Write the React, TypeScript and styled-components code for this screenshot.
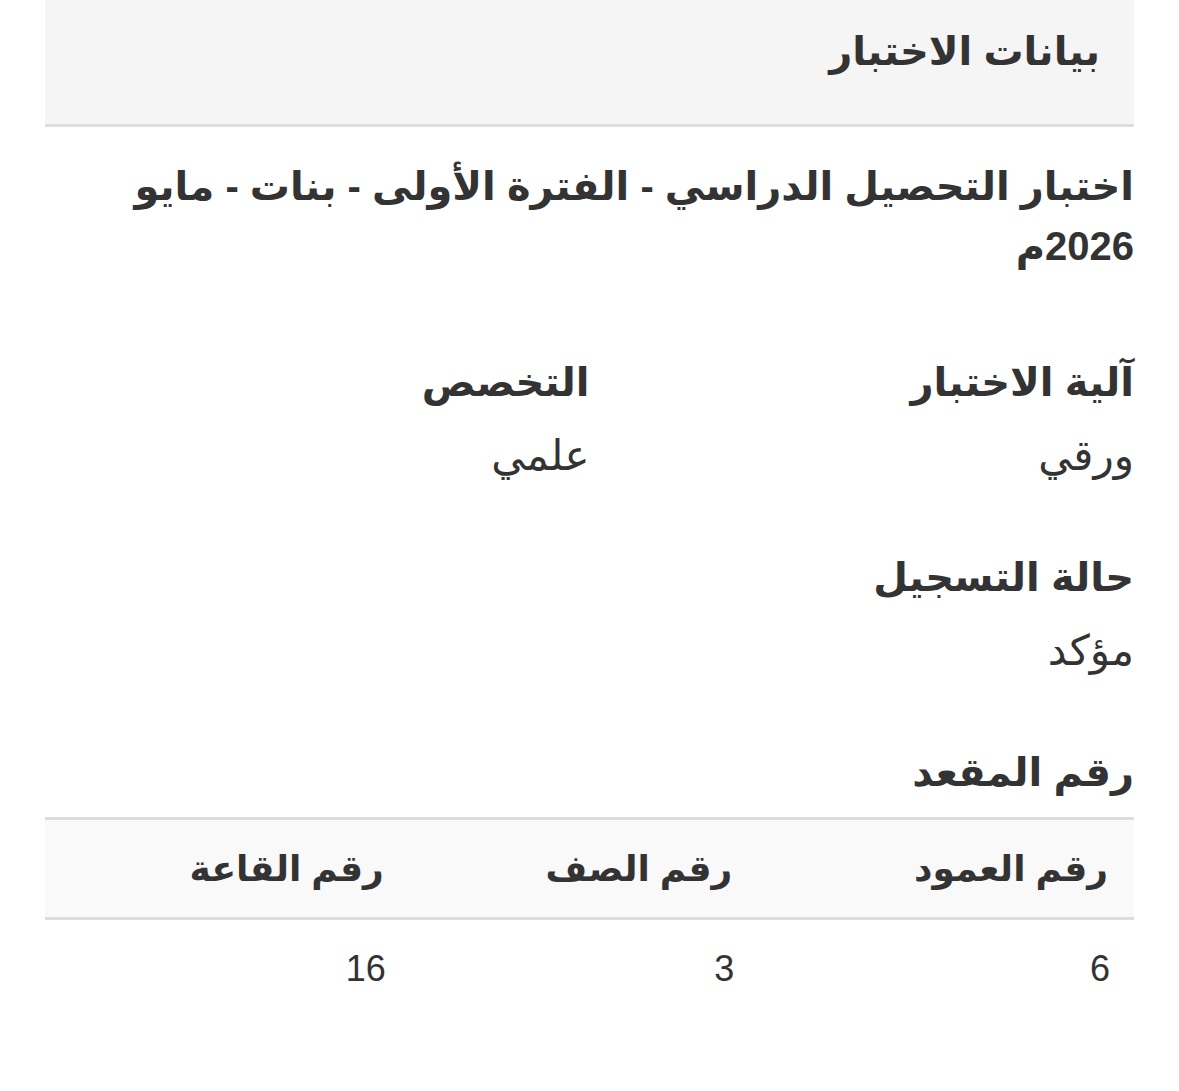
import styled, { createGlobalStyle } from "styled-components";

const GlobalStyle = createGlobalStyle`
  html, body {
    margin: 0;
    padding: 0;
    background: #ffffff;
  }
  body {
    font-family: "Liberation Sans", "DejaVu Sans", sans-serif;
    color: #333333;
  }
`;

const Page = styled.div`
  direction: rtl;
  padding: 0 45px;
`;

const PanelHeading = styled.div`
  background: #f5f5f5;
  border-bottom: 3px solid #dddddd;
  height: 124px;
  display: flex;
  align-items: center;
  padding: 0 34px;
`;

const PanelTitle = styled.h3`
  margin: -23px 0 0;
  font-size: 40px;
  font-weight: 700;
`;

const PanelBody = styled.div`
  padding-top: 29px;
`;

const ExamName = styled.h2`
  margin: 0 0 74px;
  font-size: 40px;
  font-weight: 700;
  line-height: 60px;
`;

const Row = styled.div`
  display: grid;
  grid-template-columns: 1fr 1fr;
`;

const Field = styled.div`
  margin-bottom: 57px;
`;

const Label = styled.h4`
  margin: 0;
  font-size: 40px;
  font-weight: 700;
  line-height: 64px;
`;

const Value = styled.div`
  font-size: 42px;
  line-height: 64px;
  margin-top: 10px;
`;

const SeatTitle = styled(Label)`
  margin-top: 27px;
  margin-bottom: 13px;
`;

const Table = styled.table`
  width: 100%;
  border-collapse: collapse;
  border-top: 3px solid #dddddd;
`;

const HeadCell = styled.th<{ $width: string }>`
  width: ${({ $width }) => $width};
  background: #f9f9f9;
  border-bottom: 3px solid #dddddd;
  text-align: right;
  padding: 24px 26px;
  font-size: 36px;
  font-weight: 700;
  line-height: 49px;
`;

const Cell = styled.td`
  text-align: right;
  padding: 24px 24px;
  font-size: 36px;
  line-height: 49px;
`;

const seatColumns = [
  { title: "رقم العمود", value: "6", width: "34.5%" },
  { title: "رقم الصف", value: "3", width: "32%" },
  { title: "رقم القاعة", value: "16", width: "33.5%" },
];

export default function App() {
  return (
    <>
      <GlobalStyle />
      <Page>
        <PanelHeading>
          <PanelTitle>بيانات الاختبار</PanelTitle>
        </PanelHeading>
        <PanelBody>
          <ExamName>اختبار التحصيل الدراسي - الفترة الأولى - بنات - مايو 2026م</ExamName>
          <Row>
            <Field>
              <Label>آلية الاختبار</Label>
              <Value>ورقي</Value>
            </Field>
            <Field>
              <Label>التخصص</Label>
              <Value>علمي</Value>
            </Field>
          </Row>
          <Field>
            <Label>حالة التسجيل</Label>
            <Value>مؤكد</Value>
          </Field>
          <SeatTitle>رقم المقعد</SeatTitle>
          <Table>
            <thead>
              <tr>
                {seatColumns.map((c) => (
                  <HeadCell key={c.title} $width={c.width}>
                    {c.title}
                  </HeadCell>
                ))}
              </tr>
            </thead>
            <tbody>
              <tr>
                {seatColumns.map((c) => (
                  <Cell key={c.title}>{c.value}</Cell>
                ))}
              </tr>
            </tbody>
          </Table>
        </PanelBody>
      </Page>
    </>
  );
}
